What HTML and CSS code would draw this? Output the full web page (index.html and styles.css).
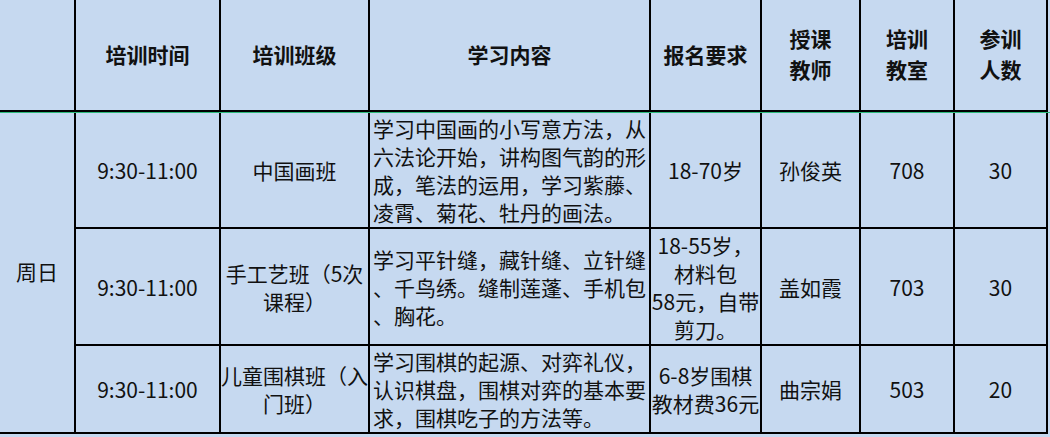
FILE: index.html
```html
<!DOCTYPE html>
<html lang="zh-CN">
<head>
<meta charset="utf-8">
<title>培训课程表</title>
<link rel="stylesheet" href="styles.css">
</head>
<body>
<div class="sheet">
  <div class="cell head"></div>
  <div class="cell head">培训时间</div>
  <div class="cell head">培训班级</div>
  <div class="cell head">学习内容</div>
  <div class="cell head">报名要求</div>
  <div class="cell head">授课<br>教师</div>
  <div class="cell head">培训<br>教室</div>
  <div class="cell head">参训<br>人数</div>
  <div class="green"></div>

  <div class="cell day">周日</div>

  <div class="cell r1">9:30-11:00</div>
  <div class="cell r1">中国画班</div>
  <div class="cell r1 left"><span>学习中国画的小写意方法，从</span><span>六法论开始，讲构图气韵的形</span><span>成，笔法的运用，学习紫藤、</span><span>凌霄、菊花、牡丹的画法。</span></div>
  <div class="cell r1">18-70岁</div>
  <div class="cell r1">孙俊英</div>
  <div class="cell r1">708</div>
  <div class="cell r1">30</div>

  <div class="cell r2">9:30-11:00</div>
  <div class="cell r2"><span>手工艺班（5次</span><span>课程）</span></div>
  <div class="cell r2 left"><span>学习平针缝，藏针缝、立针缝</span><span>、千鸟绣。缝制莲蓬、手机包</span><span>、胸花。</span></div>
  <div class="cell r2"><span>18-55岁，</span><span>材料包</span><span>58元，自带</span><span>剪刀。</span></div>
  <div class="cell r2">盖如霞</div>
  <div class="cell r2">703</div>
  <div class="cell r2">30</div>

  <div class="cell r3">9:30-11:00</div>
  <div class="cell r3"><span>儿童围棋班（入</span><span>门班）</span></div>
  <div class="cell r3 left"><span>学习围棋的起源、对弈礼仪，</span><span>认识棋盘，围棋对弈的基本要</span><span>求，围棋吃子的方法等。</span></div>
  <div class="cell r3"><span>6-8岁围棋</span><span>教材费36元</span></div>
  <div class="cell r3">曲宗娟</div>
  <div class="cell r3">503</div>
  <div class="cell r3">20</div>
</div>
</body>
</html>
```

FILE: styles.css
```css
html, body {
  margin: 0;
  padding: 0;
  background: #c6d9f0;
}

body {
  width: 1050px;
  height: 437px;
  overflow: hidden;
  font-family: "Noto Sans CJK SC", "Noto Sans", sans-serif;
  font-size: 21px;
  color: #111;
}

.sheet {
  display: grid;
  width: 1048px;
  grid-template-columns: 76px 145px 149px 281px 111px 99px 94px 93px;
  grid-template-rows: 112px 1px 116px 117px 88px;
}

.cell {
  box-sizing: border-box;
  border-right: 2px solid #000;
  border-bottom: 2px solid #000;
  display: flex;
  flex-direction: column;
  align-items: center;
  justify-content: center;
  text-align: center;
  line-height: 28px;
  white-space: nowrap;
}

.cell span {
  display: block;
}

.head {
  font-weight: 700;
  line-height: 31px;
  padding-bottom: 2px;
}

.green {
  grid-column: 1 / -1;
  width: 1050px;
  height: 1px;
  background: #2dbb7c;
}

.day {
  grid-column: 1;
  grid-row: 3 / 6;
  padding-bottom: 4px;
}

.left {
  align-items: flex-start;
  text-align: left;
  padding-left: 3px;
}
```
